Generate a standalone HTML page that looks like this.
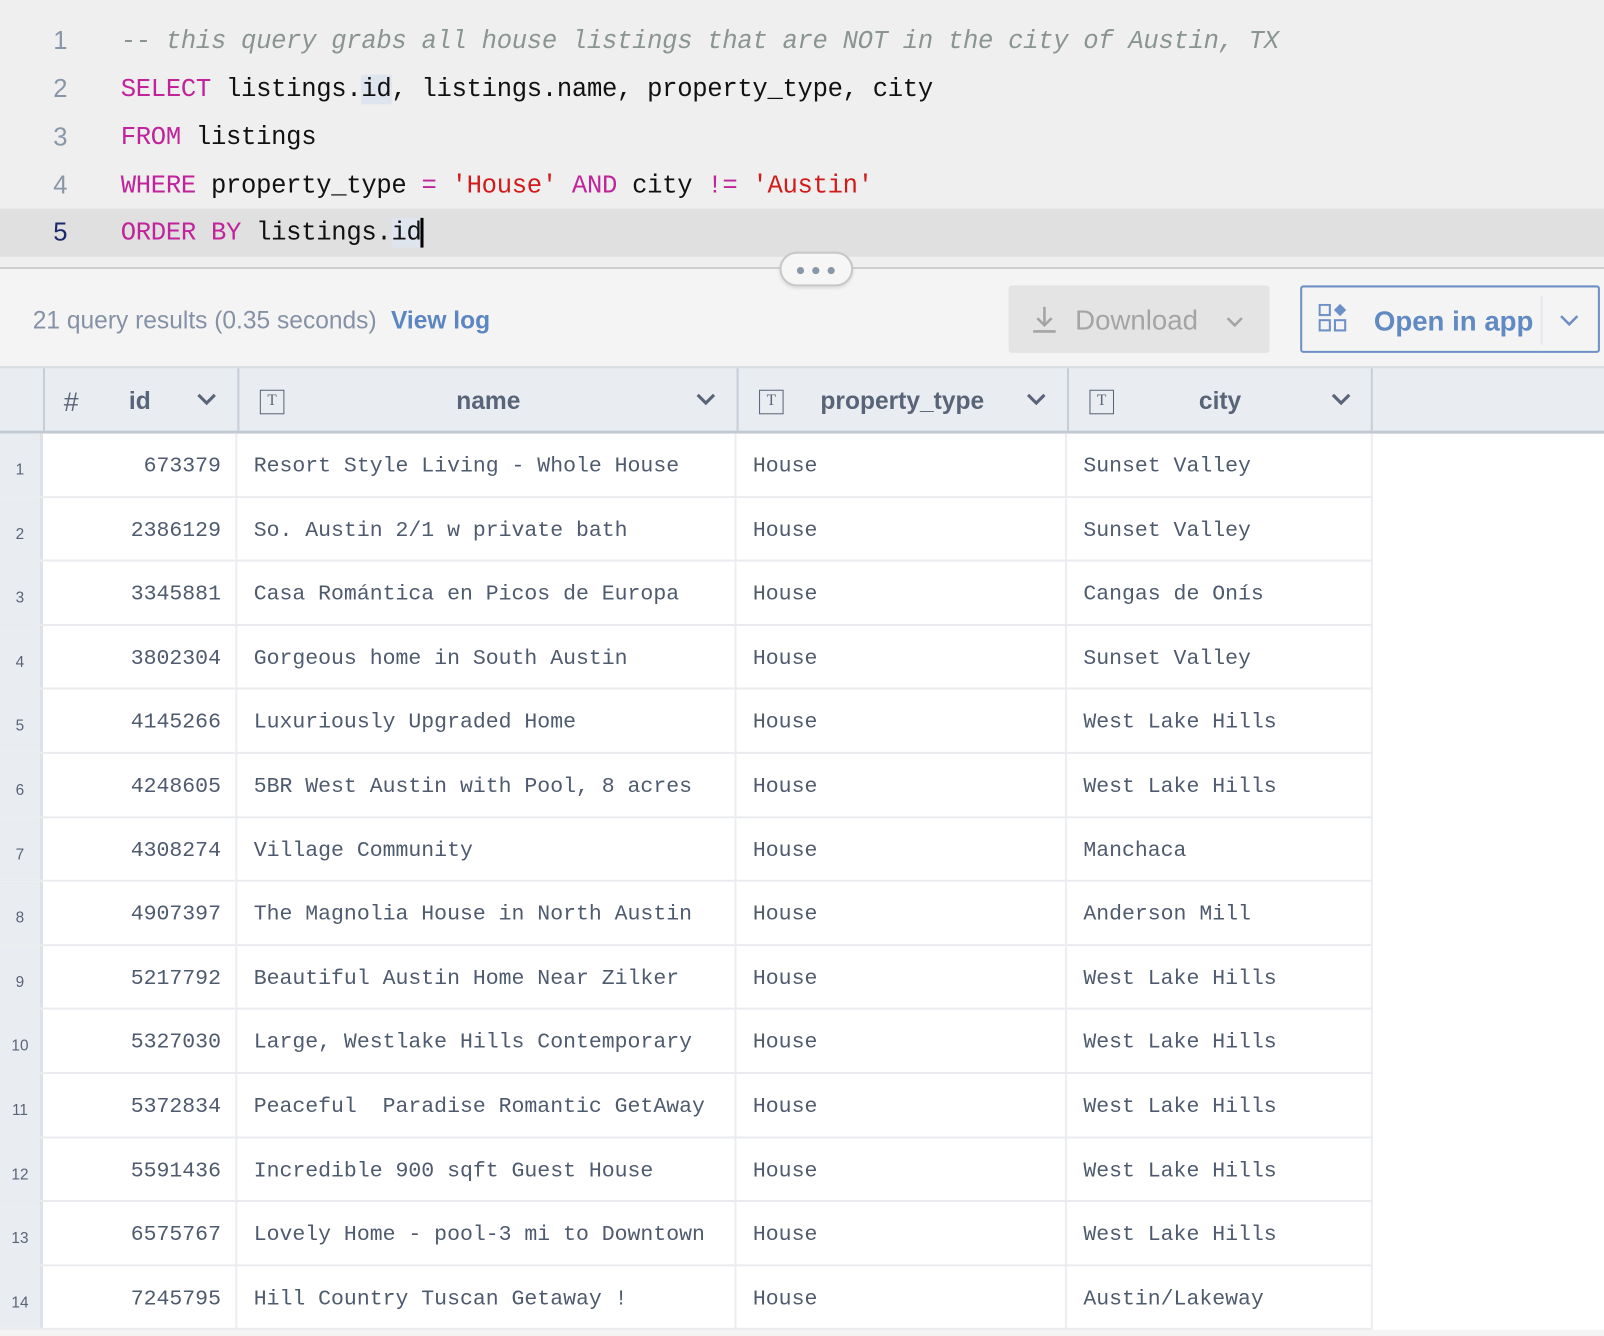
<!DOCTYPE html>
<html><head><meta charset="utf-8"><style>
*{margin:0;padding:0;box-sizing:border-box}
html,body{width:1604px;height:1330px;overflow:hidden;background:#f4f4f4}
#w{position:absolute;left:0;top:0;width:1568px;height:1300px;transform:scale(1.02296);transform-origin:0 0;background:#f4f4f4;font-family:"Liberation Sans",sans-serif}
.ed{position:absolute;left:0;top:0;width:1568px;height:262px;background:#efefef}
.ln{position:absolute;left:0;width:1568px;height:47px;font-family:"Liberation Mono",monospace;font-size:25px;line-height:47px;color:#111}
.ln .n{position:absolute;left:52px;color:#8896a8;font-family:"Liberation Sans",sans-serif;font-size:25px}
.ln .c{position:absolute;left:118px;white-space:pre;letter-spacing:-0.3px}
.k{color:#c0239a}.s{color:#d11a1a}.cm{color:#8a9590;font-style:italic}
.hl{background:#dfe5ee}
.div{position:absolute;left:0;top:261px;width:1568px;height:2px;background:#cfcfcf}
.pill{position:absolute;left:762px;top:246px;width:72px;height:34px;border:2px solid #c8c8c8;border-radius:17px;background:#f6f6f6;box-shadow:0 2px 3px rgba(0,0,0,.1)}
.pill i{position:absolute;top:13px;width:7px;height:7px;border-radius:50%;background:#8a97a8}
.res{position:absolute;left:32px;top:300px;font-size:24px;color:#8592a6}
.res b{color:#5b86c2;margin-left:14px}
.dl{position:absolute;left:986px;top:279px;width:255px;height:66px;background:#e4e4e4;border-radius:3px;color:#a4a4a4;font-size:27px}
.op{position:absolute;left:1271px;top:279px;width:293px;height:66px;border:2px solid #6d90c6;border-radius:3px;color:#6189c2;font-size:27px;font-weight:bold}
.th{position:absolute;left:0;top:358px;width:1568px;height:66px;background:#e9ecf1;border-top:2px solid #d8dce3;border-bottom:3px solid #c3c9d3}
.hc{position:absolute;top:0;height:61px;border-left:2px solid #c8ced8;color:#5a6478;font-weight:bold;font-size:24px;line-height:66px}
.T{position:absolute;top:21px;width:24px;height:24px;border:1.5px solid #5a6478;font:15px/21px "Liberation Serif",serif;text-align:center;font-weight:normal}
.chev{position:absolute;top:24px}
.white{position:absolute;left:0;top:424px;width:1568px;height:876px;background:#fff}
.row{position:absolute;left:0;width:1342px;height:62.6px;background:#fff;font-family:"Liberation Mono",monospace;font-size:21px;color:#4e5a6e;line-height:65px;border-bottom:2px solid #e9ebee}
.row div{position:absolute;top:0;height:100%;white-space:pre}
.rn{left:0;width:42px;background:#e9ecf1;font-family:"Liberation Sans",sans-serif;font-size:15px;color:#5a6478;text-align:center;padding-top:3px;border-right:3px solid #dde1e8}
.ci{left:42px;width:190px;text-align:right;padding-right:14px;border-right:2px solid #ebedf0}
.cn{left:232px;width:488px;padding-left:16px;border-right:2px solid #ebedf0}
.cp{left:720px;width:323px;padding-left:16px;border-right:2px solid #ebedf0}
.cc{left:1043px;width:299px;padding-left:16px;border-right:2px solid #ebedf0}
</style></head><body><div id="w">
<div class="ed">
<div class="ln" style="top:17px"><span class="n">1</span><span class="c cm">-- this query grabs all house listings that are NOT in the city of Austin, TX</span></div>
<div class="ln" style="top:64px"><span class="n">2</span><span class="c"><span class="k">SELECT</span> listings.<span class="hl">id</span>, listings.name, property_type, city</span></div>
<div class="ln" style="top:111px"><span class="n">3</span><span class="c"><span class="k">FROM</span> listings</span></div>
<div class="ln" style="top:158px"><span class="n">4</span><span class="c"><span class="k">WHERE</span> property_type <span class="k">=</span> <span class="s">'House'</span> <span class="k">AND</span> city <span class="k">!=</span> <span class="s">'Austin'</span></span></div>
<div class="ln" style="top:204px;background:#e0e0e0"><span class="n" style="color:#1a2a6a">5</span><span class="c"><span class="k">ORDER BY</span> listings.<span class="hl">id</span><span style="border-left:3px solid #000;margin-left:-1px"></span></span></div>
</div>
<div class="div"></div>
<div class="pill"><i style="left:15px"></i><i style="left:30px"></i><i style="left:45px"></i></div>
<div class="res">21 query results (0.35 seconds)<b>View log</b></div>
<div class="dl"><svg style="position:absolute;left:22px;top:19px" width="26" height="28" viewBox="0 0 26 28"><path d="M13 2v18M6 13l7 7 7-7M2 26h22" stroke="#a4a4a4" stroke-width="2.5" fill="none"/></svg><span style="position:absolute;left:65px;top:19px">Download</span><svg style="position:absolute;left:212px;top:30px" width="18" height="12"><path d="M2 2l7 7 7-7" stroke="#a4a4a4" stroke-width="2.5" fill="none"/></svg></div>
<div class="op"><svg style="position:absolute;left:16px;top:16px" width="28" height="28" viewBox="0 0 28 28"><rect x="1" y="1" width="10" height="10" fill="none" stroke="#6d90c6" stroke-width="2"/><rect x="1" y="16" width="10" height="10" fill="none" stroke="#6d90c6" stroke-width="2"/><rect x="16" y="16" width="10" height="10" fill="none" stroke="#6d90c6" stroke-width="2"/><path d="M21 0l6 6-6 6-6-6z" fill="#6d90c6"/></svg><span style="position:absolute;left:70px;top:18px">Open in app</span><div style="position:absolute;left:233px;top:8px;width:2px;height:48px;background:#e4e8ee"></div><svg style="position:absolute;left:251px;top:26px" width="20" height="12"><path d="M2 2l8 8 8-8" stroke="#6d90c6" stroke-width="2.5" fill="none"/></svg></div>
<div class="th">
<div class="hc" style="left:42px;width:190px"><span style="position:absolute;left:18px;font-weight:normal;font-size:26px;font-style:italic">#</span><span style="position:absolute;left:82px">id</span><svg class="chev" style="left:148px" width="20" height="14"><path d="M2 2l8 8 8-8" stroke="#5a6478" stroke-width="3" fill="none"/></svg></div>
<div class="hc" style="left:232px;width:488px"><span class="T" style="left:20px">T</span><span style="position:absolute;left:212px">name</span><svg class="chev" style="left:446px" width="20" height="14"><path d="M2 2l8 8 8-8" stroke="#5a6478" stroke-width="3" fill="none"/></svg></div>
<div class="hc" style="left:720px;width:323px"><span class="T" style="left:20px">T</span><span style="position:absolute;left:80px">property_type</span><svg class="chev" style="left:281px" width="20" height="14"><path d="M2 2l8 8 8-8" stroke="#5a6478" stroke-width="3" fill="none"/></svg></div>
<div class="hc" style="left:1043px;width:299px;border-right:2px solid #c8ced8"><span class="T" style="left:20px">T</span><span style="position:absolute;left:127px">city</span><svg class="chev" style="left:256px" width="20" height="14"><path d="M2 2l8 8 8-8" stroke="#5a6478" stroke-width="3" fill="none"/></svg></div>
</div>
<div class="white"></div>
<div class="row" style="top:424px"><div class="rn">1</div><div class="ci">673379</div><div class="cn">Resort Style Living - Whole House</div><div class="cp">House</div><div class="cc">Sunset Valley</div></div>
<div class="row" style="top:486.6px"><div class="rn">2</div><div class="ci">2386129</div><div class="cn">So. Austin 2/1 w private bath</div><div class="cp">House</div><div class="cc">Sunset Valley</div></div>
<div class="row" style="top:549.2px"><div class="rn">3</div><div class="ci">3345881</div><div class="cn">Casa Romántica en Picos de Europa</div><div class="cp">House</div><div class="cc">Cangas de Onís</div></div>
<div class="row" style="top:611.8px"><div class="rn">4</div><div class="ci">3802304</div><div class="cn">Gorgeous home in South Austin</div><div class="cp">House</div><div class="cc">Sunset Valley</div></div>
<div class="row" style="top:674.4px"><div class="rn">5</div><div class="ci">4145266</div><div class="cn">Luxuriously Upgraded Home</div><div class="cp">House</div><div class="cc">West Lake Hills</div></div>
<div class="row" style="top:737px"><div class="rn">6</div><div class="ci">4248605</div><div class="cn">5BR West Austin with Pool, 8 acres</div><div class="cp">House</div><div class="cc">West Lake Hills</div></div>
<div class="row" style="top:799.6px"><div class="rn">7</div><div class="ci">4308274</div><div class="cn">Village Community</div><div class="cp">House</div><div class="cc">Manchaca</div></div>
<div class="row" style="top:862.2px"><div class="rn">8</div><div class="ci">4907397</div><div class="cn">The Magnolia House in North Austin</div><div class="cp">House</div><div class="cc">Anderson Mill</div></div>
<div class="row" style="top:924.8px"><div class="rn">9</div><div class="ci">5217792</div><div class="cn">Beautiful Austin Home Near Zilker</div><div class="cp">House</div><div class="cc">West Lake Hills</div></div>
<div class="row" style="top:987.4px"><div class="rn">10</div><div class="ci">5327030</div><div class="cn">Large, Westlake Hills Contemporary</div><div class="cp">House</div><div class="cc">West Lake Hills</div></div>
<div class="row" style="top:1050px"><div class="rn">11</div><div class="ci">5372834</div><div class="cn">Peaceful  Paradise Romantic GetAway</div><div class="cp">House</div><div class="cc">West Lake Hills</div></div>
<div class="row" style="top:1112.6px"><div class="rn">12</div><div class="ci">5591436</div><div class="cn">Incredible 900 sqft Guest House</div><div class="cp">House</div><div class="cc">West Lake Hills</div></div>
<div class="row" style="top:1175.2px"><div class="rn">13</div><div class="ci">6575767</div><div class="cn">Lovely Home - pool-3 mi to Downtown</div><div class="cp">House</div><div class="cc">West Lake Hills</div></div>
<div class="row" style="top:1237.8px"><div class="rn">14</div><div class="ci">7245795</div><div class="cn">Hill Country Tuscan Getaway !</div><div class="cp">House</div><div class="cc">Austin/Lakeway</div></div>
</div></body></html>
